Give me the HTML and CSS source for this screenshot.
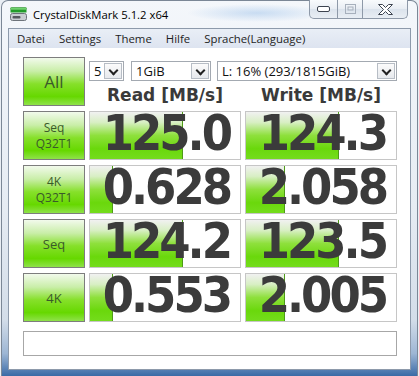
FILE: index.html
```html
<!DOCTYPE html>
<html>
  <head>
    <title>CrystalDiskMark 5.1.2 x64</title>
    <link rel="stylesheet" href="styles.css">
  </head>
  <body>
    <div class="window">
      <div class="titlebar">
        <svg class="app-icon" width="17" height="14" viewBox="0 0 17 14">
          <rect x="0.5" y="0.5" width="16" height="2.5" rx="1" fill="#6fd36f" stroke="#2f8f2f" stroke-width="0.6"/>
          <rect x="0.5" y="3" width="16" height="2.5" fill="#229c2a"/>
          <rect x="0.5" y="6.5" width="16" height="7" rx="2" fill="#c9cdd2" stroke="#6d737a"/>
          <rect x="2.5" y="9" width="8" height="2.5" rx="1" fill="#55595e"/>
        </svg>
        <span class="title">CrystalDiskMark 5.1.2 x64</span>
        <div class="caption-buttons">
          <span class="cap-btn cap-min">
            <svg width="13" height="6" viewBox="0 0 13 6"><rect x="0.5" y="0.5" width="12" height="5" rx="1.5" fill="#fff" stroke="#3d4450"/></svg>
          </span>
          <span class="cap-btn cap-max">
            <svg width="11" height="10" viewBox="0 0 11 10"><rect x="0.5" y="0.5" width="10" height="9" fill="none" stroke="#a7b0bc"/><rect x="3" y="3" width="5" height="3" fill="none" stroke="#a7b0bc"/></svg>
          </span>
          <span class="cap-btn cap-close">
            <svg width="15" height="11" viewBox="0 0 15 11"><path d="M0.5 0.5h4l3 3 3-3h4l-5 5 5 5h-4l-3-3-3 3h-4l5-5z" fill="#fff" stroke="#3d4450" stroke-linejoin="round"/></svg>
          </span>
        </div>
      </div>

      <div class="client">
        <ul class="menubar">
          <li>Datei</li>
          <li>Settings</li>
          <li>Theme</li>
          <li>Hilfe</li>
          <li>Sprache(Language)</li>
        </ul>

        <div class="bench">
          <div class="test-btn btn-all">All</div>
          <div class="top-controls">
            <div class="selects">
              <div class="combo combo-count"><span>5</span><i class="arrow"></i></div>
              <div class="combo combo-size"><span>1GiB</span><i class="arrow"></i></div>
              <div class="combo combo-drive"><span>L: 16% (293/1815GiB)</span><i class="arrow"></i></div>
            </div>
            <div class="headers">
              <div>Read [MB/s]</div>
              <div>Write [MB/s]</div>
            </div>
          </div>

          <div class="test-btn">Seq<br>Q32T1</div>
          <div class="result"><div class="bar" style="width: 93px"></div><div class="value">125.0</div></div>
          <div class="result"><div class="bar" style="width: 93px"></div><div class="value">124.3</div></div>

          <div class="test-btn">4K<br>Q32T1</div>
          <div class="result"><div class="bar" style="width: 23px"></div><div class="value">0.628</div></div>
          <div class="result"><div class="bar" style="width: 39px"></div><div class="value">2.058</div></div>

          <div class="test-btn btn-single">Seq</div>
          <div class="result"><div class="bar" style="width: 93px"></div><div class="value">124.2</div></div>
          <div class="result"><div class="bar" style="width: 93px"></div><div class="value">123.5</div></div>

          <div class="test-btn btn-single">4K</div>
          <div class="result"><div class="bar" style="width: 23px"></div><div class="value">0.553</div></div>
          <div class="result"><div class="bar" style="width: 39px"></div><div class="value">2.005</div></div>

          <div class="comment"></div>
        </div>
      </div>
    </div>
  </body>
</html>
```

FILE: styles.css
```css
body {
  margin: 0;
  overflow: hidden;
  background: #e9eef4;
  font-family: "Open Sans", "DejaVu Sans", sans-serif;
}

.window {
  margin-left: 1px;
  width: 417px;
  height: 376px;
  box-sizing: border-box;
  border: 1px solid #7b8796;
  border-bottom: none;
  border-radius: 7px 7px 0 0;
  padding: 0 6px;
  background: linear-gradient(to bottom, #f4f7fb 0%, #e6ecf3 55%, #d3dde9 85%, #9db6d4 94%, #3a6aa6 100%);
  display: flex;
  flex-direction: column;
}

/* title bar */

.titlebar {
  height: 27px;
  display: flex;
  align-items: flex-start;
  margin: 0 -6px;
  background: radial-gradient(ellipse 70px 9px at 255px 12px, rgba(120, 170, 225, 0.35), transparent);
}

.app-icon {
  margin: 6px 0 0 8px;
}

.title {
  margin: 5px 0 0 6px;
  font-size: 11.3px;
  line-height: 17px;
  color: #000;
}

.caption-buttons {
  margin: -1px 9px 0 auto;
  display: flex;
  height: 19px;
}

.cap-btn {
  display: flex;
  align-items: center;
  justify-content: center;
  box-sizing: border-box;
  height: 19px;
  border: 1px solid #8e99a8;
  border-top: none;
  background: linear-gradient(to bottom, #f8fafc 0%, #e8edf3 50%, #dbe3ec 51%, #e9eef4 100%);
}

.cap-min {
  width: 29px;
  border-radius: 0 0 0 5px;
}

.cap-max {
  width: 25px;
  border-left: none;
}

.cap-close {
  width: 45px;
  border-left: none;
  border-radius: 0 0 5px 0;
}

/* client area */

.client {
  flex: 1;
  margin-bottom: 6px;
  border: 1px solid #8d9aab;
  background: #fff;
  display: flex;
  flex-direction: column;
}

.menubar {
  list-style: none;
  margin: 0;
  padding: 0 0 0 1px;
  height: 19px;
  display: flex;
  background: linear-gradient(to bottom, #e9eef6 0%, #dde4f0 100%);
  font-size: 11.4px;
  line-height: 19px;
  color: #1e1e1e;
}

.menubar li {
  padding: 0 7px;
}

.bench {
  display: grid;
  grid-template-columns: 62px 152px 152px;
  grid-template-rows: 49px 49px 49px 49px 49px 29px;
  column-gap: 4px;
  row-gap: 5px;
  padding: 9px 0 0 14px;
}

.test-btn {
  box-sizing: border-box;
  border: 1px solid #7d7d7d;
  background: linear-gradient(to bottom, #f2faec 0%, #c9eea8 28%, #86e02a 55%, #66d800 82%, #8fe24a 100%);
  color: #3a5a2a;
  font-size: 12px;
  line-height: 16px;
  text-align: center;
  display: flex;
  align-items: center;
  justify-content: center;
}

.btn-all {
  font-size: 17px;
}

.btn-single {
  font-size: 13px;
}

.top-controls {
  grid-column: 2 / 4;
  display: flex;
  flex-direction: column;
}

.selects {
  margin-top: 4px;
  display: flex;
  gap: 6px;
}

.combo {
  box-sizing: border-box;
  height: 20px;
  border: 1px solid #a3a9b1;
  background: #fff;
  display: flex;
  align-items: center;
  padding: 0 1px 0 4px;
  font-size: 13px;
  color: #111;
}

.combo span {
  flex: 1;
}

.combo-count {
  width: 35px;
  margin-right: 1px;
}

.combo-size {
  width: 80px;
}

.combo-drive {
  width: 180px;
}

.arrow {
  width: 18px;
  height: 16px;
  box-sizing: border-box;
  border: 1px solid #b7bdc5;
  background: linear-gradient(to bottom, #fbfbfb, #e6e9ed);
  position: relative;
}

.arrow::after {
  content: "";
  position: absolute;
  left: 5px;
  top: 3px;
  width: 5px;
  height: 5px;
  border-right: 2px solid #222;
  border-bottom: 2px solid #222;
  transform: rotate(45deg);
}

.headers {
  margin-top: 7px;
  display: grid;
  grid-template-columns: 152px 152px;
  column-gap: 4px;
  font-family: "DejaVu Sans", sans-serif;
  font-weight: bold;
  font-size: 17px;
  line-height: 15px;
  color: #3a3a3a;
  text-align: center;
}

.result {
  box-sizing: border-box;
  border: 1px solid #c6c6c6;
  background: #fff;
  display: grid;
}

.bar,
.value {
  grid-area: 1 / 1;
}

.bar {
  box-sizing: border-box;
  border-right: 1px solid #4e9a18;
  background: linear-gradient(to bottom, #f1f1f1 0%, #d8efc4 22%, #8ee03c 50%, #6ad80c 78%, #74dc1c 100%);
}

.value {
  justify-self: end;
  padding: 0 10px 0 0;
  font-family: "DejaVu Sans Condensed", "DejaVu Sans", sans-serif;
  font-stretch: condensed;
  font-weight: bold;
  font-size: 50px;
  line-height: 43px;
  letter-spacing: -3px;
  color: #3b3b3b;
}

.comment {
  grid-column: 1 / 4;
  margin-top: 4px;
  border: 1px solid #a7a7a7;
  background: #fff;
}
```
